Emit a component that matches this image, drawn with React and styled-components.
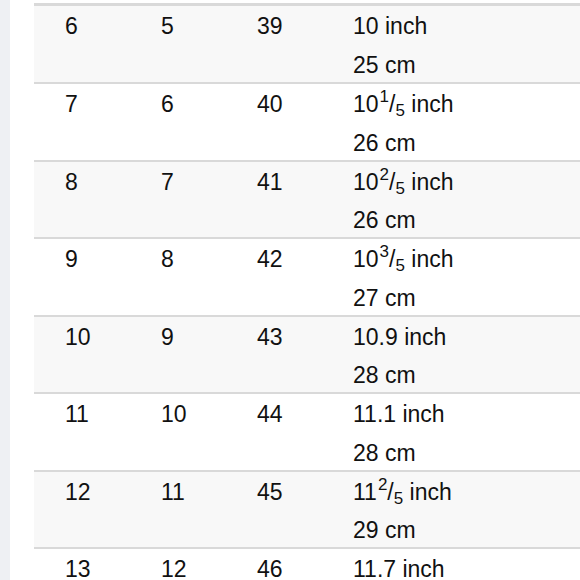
import React from 'react';
import styled, { createGlobalStyle } from 'styled-components';

const sizes = [
  { us: '6', uk: '5', eu: '39', inch: ['10'], cm: '25 cm' },
  { us: '7', uk: '6', eu: '40', inch: ['10', '1', '5'], cm: '26 cm' },
  { us: '8', uk: '7', eu: '41', inch: ['10', '2', '5'], cm: '26 cm' },
  { us: '9', uk: '8', eu: '42', inch: ['10', '3', '5'], cm: '27 cm' },
  { us: '10', uk: '9', eu: '43', inch: ['10.9'], cm: '28 cm' },
  { us: '11', uk: '10', eu: '44', inch: ['11.1'], cm: '28 cm' },
  { us: '12', uk: '11', eu: '45', inch: ['11', '2', '5'], cm: '29 cm' },
  { us: '13', uk: '12', eu: '46', inch: ['11.7'], cm: '30 cm' },
];

function Inch({ parts }) {
  const [whole, num, den] = parts;
  return (
    <Line>
      {whole}
      {num && (
        <>
          <Sup>{num}</Sup>/<Sub>{den}</Sub>
        </>
      )}{' '}
      inch
    </Line>
  );
}

function App() {
  return (
    <>
      <GlobalStyle />
      <Page>
        <Strip />
        <Main>
          <Table>
            {sizes.map((s, i) => (
              <Row key={s.us} shaded={i % 2 === 0} first={i === 0}>
                <Cell><Line>{s.us}</Line></Cell>
                <Cell><Line>{s.uk}</Line></Cell>
                <Cell><Line>{s.eu}</Line></Cell>
                <Cell>
                  <Inch parts={s.inch} />
                  <Line>{s.cm}</Line>
                </Cell>
              </Row>
            ))}
          </Table>
        </Main>
      </Page>
    </>
  );
}

const GlobalStyle = createGlobalStyle`
    html, body {
        margin: 0;
        padding: 0;
        background: #ffffff;
    }
    body {
        font-family: "Liberation Sans", Arial, sans-serif;
        color: #111111;
    }
`

const Page = styled.div`
    display: flex;
    width: 580px;
    height: 580px;
    overflow: hidden;
`

const Strip = styled.div`
    width: 10px;
    flex-shrink: 0;
    background: #eef0f3;
`

const Main = styled.div`
    flex: 1;
    padding: 3px 0 0 24px;
    background: #ffffff;
`

const Table = styled.div`
    display: flex;
    flex-direction: column;
`

const Row = styled.div`
    display: grid;
    grid-template-columns: 96px 96px 96px 1fr;
    box-sizing: border-box;
    flex-shrink: 0;
    height: ${p => (p.first ? '79px' : '77.5px')};
    border-top: ${p => (p.first ? '3px' : '2px')} solid #d9d9d9;
    background: ${p => (p.shaded ? '#f8f8f8' : '#ffffff')};
`

const Cell = styled.div`
    padding: 1px 0 0 31px;
    font-size: 23px;
    line-height: 38.5px;
`

const Line = styled.div`
    white-space: nowrap;
`

const Sup = styled.span`
    font-size: 17px;
    line-height: 1;
    vertical-align: 10px;
    margin-left: 1px;
`

const Sub = styled.span`
    font-size: 17px;
    line-height: 1;
    vertical-align: -4px;
`

export default App;
